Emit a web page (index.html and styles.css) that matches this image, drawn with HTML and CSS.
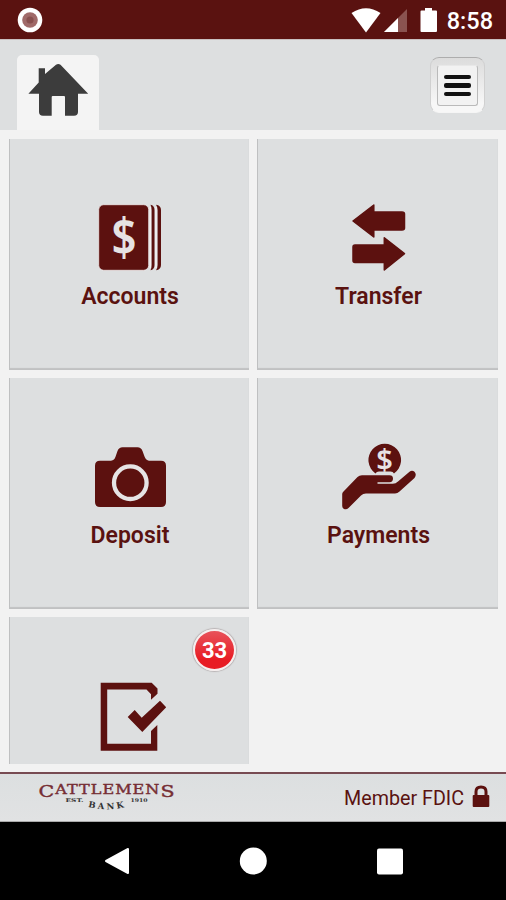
FILE: index.html
```html
<!DOCTYPE html>
<html lang="en">
<head>
    <meta charset="utf-8">
    <title>Cattlemens Bank</title>
    <link rel="stylesheet" href="styles.css">
</head>
<body>
    <div class="phone">
        <div class="status-bar">
            <svg class="record" width="26" height="26" viewBox="0 0 26 26">
                <circle cx="13" cy="13" r="12.3" fill="#fff"/>
                <circle cx="13" cy="13" r="7.8" fill="#a06a69"/>
                <circle cx="13" cy="13" r="3.6" fill="#88504f"/>
            </svg>
            <svg class="signals" width="92" height="28" viewBox="0 0 92 28">
                <path d="M1.5 7Q16 -2.5 30.5 7L16 26.5Z" fill="#fff"/>
                <path d="M57 3V26H34Z" fill="#8a5350"/>
                <path d="M48 12V26H34Z" fill="#fff"/>
                <path d="M75 2h7v2.500h4q1 0 1 1V25q0 1-1 1H71.500q-1 0-1-1V5.500q0-1 1-1H75z" fill="#fff"/>
            </svg>
            <span class="time">8:58</span>
        </div>

        <div class="header">
            <a class="home-tab">
                <svg width="62" height="54" viewBox="27 63 62 54" fill="#3c3c3c">
                    <path d="M38.700 68.300H45V74L56 64.800Q58.300 63.200 60.500 64.800L88.200 93.800H78V112Q78 115.700 74 115.700H65V97Q65 96 64 96H52.700Q51.700 96 51.700 97V115.700H43Q39 115.700 39 112V93.800H28.400L38.700 82.500Z"/>
                </svg>
            </a>
            <button class="menu-btn">
                <span class="menu-inner">
                    <i></i>
                    <i></i>
                    <i></i>
                </span>
            </button>
        </div>

        <div class="tiles">
            <div class="tile">
                <svg class="icon" viewBox="0 0 80 72">
                    <rect x="9.700" y="3.700" width="50" height="65.600" rx="5" fill="#5c110f" stroke="#efe8e8" stroke-width="0.800"/>
                    <path d="M61.500 3.800Q65.500 4.500 65.500 9V64Q65.500 68.500 61.500 69.300Q62.600 67 62.600 64V9Q62.600 6 61.500 3.800Z" fill="#5c110f"/>
                    <path d="M67 3.800Q72 4.500 72 9V64Q72 68.500 67 69.300Q68.600 67 68.600 64V9Q68.600 6 67 3.800Z" fill="#5c110f"/>
                    <path d="M61.300 6V67M67 6V67" stroke="#f5f2f2" stroke-width="1.500"/>
                    <text class="dollar" x="35" y="55" font-size="52" textLength="25" lengthAdjust="spacingAndGlyphs">$</text>
                </svg>
                <span class="label">Accounts</span>
            </div>
            <div class="tile">
                <svg class="icon" viewBox="0 0 80 72" fill="#5c110f" stroke="#5c110f" stroke-width="1.500" stroke-linejoin="round">
                    <path d="M15 20L35.800 4V11H64Q66.500 11 66.500 13V27Q66.500 29 64 29H35.800V36Z"/>
                    <path d="M66.500 52.700L46.300 36.800V44H17Q15 44 15 46V59.500Q15 61.500 17 61.500H46.300V69Z"/>
                </svg>
                <span class="label">Transfer</span>
            </div>
            <div class="tile">
                <svg class="icon" viewBox="0 0 80 72" fill="#5c110f">
                    <path d="M11 20.700H22Q25.500 20.500 26.600 16.500L28.500 11Q30 7.300 33.500 7.300H48.500Q52 7.300 53.500 11L55.500 16.500Q57 20.500 60 20.700H72Q77 20.700 77 25.700V62Q77 67 72 67H11Q6 67 6 62V25.700Q6 20.700 11 20.700Z"/>
                    <circle cx="41.300" cy="42.700" r="16.300" fill="none" stroke="#e6e4e5" stroke-width="4.300"/>
                </svg>
                <span class="label">Deposit</span>
            </div>
            <div class="tile">
                <svg class="icon" viewBox="0 0 80 72" fill="#5c110f">
                    <path d="M37.500 33.500A16.300 16.300 0 1 1 56 33.500Q55 31.500 52.500 31.500H41Q38.500 31.500 37.500 33.500Z"/>
                    <text class="dollar" x="46.500" y="29.500" font-size="29">$</text>
                    <path d="M4.200 54Q4.200 52.500 5.500 51.500L19.500 37Q21.300 35.200 24 35.200H51.500Q55 35.200 55 38.600Q55 42.300 51.500 42.300H39.500V43.700H54Q57.500 44 60 41.500L71.500 31.700Q74 29.700 76.500 31.700Q79 34.500 76.500 38L61.500 51.500Q59.500 53.500 57 53.500H28Q25 53.500 23 55.500L10.500 68Q8.500 70 6 69Q4.200 68 4.200 66Z"/>
                </svg>
                <span class="label">Payments</span>
            </div>
            <div class="tile">
                <span class="badge">33</span>
                <svg class="icon" viewBox="0 0 80 72" fill="#5c110f">
                    <path d="M11.700 3.700H62.700L68.500 9.500V14.700L62 20.700V15.300L57.500 10.500H18.200V64.700H62V52L68.300 46V71.700H11.700Z"/>
                    <path d="M38.700 38L45.700 31L52.700 38.700L71 21.800L77.200 28.300L53.300 53Z"/>
                </svg>
            </div>
        </div>

        <div class="footer">
            <svg class="logo" width="140" height="36" viewBox="38 780 140 36">
                <defs>
                    <path id="arc" d="M87 806.500Q107 812 128 806.500"/>
                </defs>
                <text class="name" x="38.500" y="796.500" font-size="16" letter-spacing="0.800" textLength="137" lengthAdjust="spacingAndGlyphs">C<tspan font-size="12.500" dy="-3">ATTLEMEN</tspan><tspan dy="3">S</tspan></text>
                <g class="sub">
                    <text x="65.500" y="801.500" font-size="5" textLength="18" lengthAdjust="spacingAndGlyphs">EST.</text>
                    <text font-size="8.500" letter-spacing="2.600"><textPath href="#arc" startOffset="1">BANK</textPath></text>
                    <text x="130.500" y="801.500" font-size="5" textLength="17" lengthAdjust="spacingAndGlyphs">1910</text>
                </g>
            </svg>
            <div class="fdic">
                <span>Member FDIC</span>
                <svg width="18" height="23" viewBox="0 0 18 23">
                    <path d="M4 11V6.800Q4 2 9 2Q14 2 14 6.800V11" fill="none" stroke="#5c110f" stroke-width="3"/>
                    <rect x="0.700" y="10" width="16.600" height="12" rx="1" fill="#5c110f"/>
                </svg>
            </div>
        </div>

        <div class="nav-bar">
            <svg width="28" height="30" viewBox="0 0 28 30"><path d="M4 14L26 2V26Z" fill="#fff" stroke="#fff" stroke-width="2" stroke-linejoin="round"/></svg>
            <svg width="28" height="30" viewBox="0 0 28 30"><circle cx="14.300" cy="14" r="13.500" fill="#fff"/></svg>
            <svg width="28" height="30" viewBox="0 0 28 30"><rect x="1" y="1.500" width="26" height="26" rx="2" fill="#fff"/></svg>
        </div>
    </div>
</body>
</html>
```
FILE: styles.css
```css
* {
    box-sizing: border-box;
}
body {
    margin: 0;
    font-family: Roboto, "Liberation Sans", sans-serif;
    background-color: #f2f2f2;
}
svg {
    display: block;
    flex: none;
}
.phone {
    display: flex;
    flex-direction: column;
    width: 506px;
    height: 900px;
    overflow: hidden;
}
.status-bar {
    display: flex;
    align-items: center;
    height: 39px;
    padding: 1px 13px 0 17px;
    background-color: #5a1210;
    color: #ffffff;
}
.signals {
    margin-left: auto;
}
.time {
    width: 51px;
    padding-top: 2px;
    text-align: right;
    font-size: 23.5px;
    font-weight: 500;
}
.header {
    display: flex;
    justify-content: space-between;
    height: 91px;
    padding: 15px 21px 0 17px;
    background-color: #dddfe0;
    border-top: 1px solid #c9bfc0;
}
.home-tab {
    width: 82px;
    height: 75px;
    padding: 8px 0 0 10px;
    border-radius: 5px 5px 0 0;
    background-color: #f4f4f4;
}
.menu-btn {
    width: 55px;
    height: 56px;
    margin-top: 2px;
    padding: 7px 6px;
    border: 1px solid #d0d0d0;
    border-top-color: #adadad;
    border-bottom-color: #f5f5f5;
    border-radius: 9px;
    background: linear-gradient(#dcdcdc, #f7f7f7 85%);
}
.menu-inner {
    display: flex;
    flex-direction: column;
    justify-content: center;
    align-items: center;
    gap: 4px;
    height: 41px;
    border: 1px solid #bababa;
    border-top-color: #e8e8e8;
    border-radius: 3px;
    background-color: #f2f2f2;
}
.menu-inner i {
    width: 27px;
    height: 4.5px;
    border-radius: 2px;
    background-color: #111111;
}
.tiles {
    display: grid;
    grid-template-columns: 240px 241px;
    grid-auto-rows: 231px;
    gap: 8px;
    height: 634px;
    margin-bottom: 8px;
    padding: 9px 8px 0 9px;
    overflow: hidden;
}
.tile {
    position: relative;
    display: flex;
    flex-direction: column;
    align-items: center;
    padding-top: 62px;
    background-color: #dddfe0;
    box-shadow: inset 1px 0 0 #bfc0c1, inset 0 -2px 1px #c0c1c2;
}
.icon {
    width: 80px;
    height: 72px;
}
.label {
    margin-top: 9px;
    padding-left: 2px;
    line-height: 29px;
    font-size: 23px;
    font-weight: 600;
    color: #5a1210;
}
.dollar {
    font-family: "Noto Sans", sans-serif;
    font-weight: 600;
    text-anchor: middle;
    fill: #e6e2e3;
    stroke: none;
}
.badge {
    position: absolute;
    top: 12px;
    right: 13px;
    width: 43px;
    height: 42px;
    border: 2px solid #f6efef;
    border-radius: 50%;
    background: linear-gradient(#e8525a, #e81c24 75%);
    box-shadow: 0 0 1px 1px #b9b4b5;
    line-height: 39px;
    text-align: center;
    font-size: 22px;
    font-weight: 700;
    color: #ffffff;
}
.footer {
    display: flex;
    justify-content: space-between;
    height: 50px;
    padding: 6px 16px 0 38px;
    border-top: 2px solid #774b52;
    border-bottom: 1px solid #aaaaaa;
    background: linear-gradient(#dcdfe0, #e1e2e3);
}
.name {
    font-family: "DejaVu Serif", serif;
    fill: #762e34;
    stroke: #762e34;
    stroke-width: 0.4px;
}
.sub {
    font-family: "DejaVu Serif", serif;
    font-weight: 700;
    fill: #333333;
}
.fdic {
    display: flex;
    gap: 8px;
    padding-top: 5px;
    line-height: 27px;
    font-size: 19.7px;
    color: #5a1210;
}
.nav-bar {
    display: flex;
    justify-content: center;
    gap: 109px;
    flex: 1;
    padding-top: 25px;
    background-color: #000000;
}
```
